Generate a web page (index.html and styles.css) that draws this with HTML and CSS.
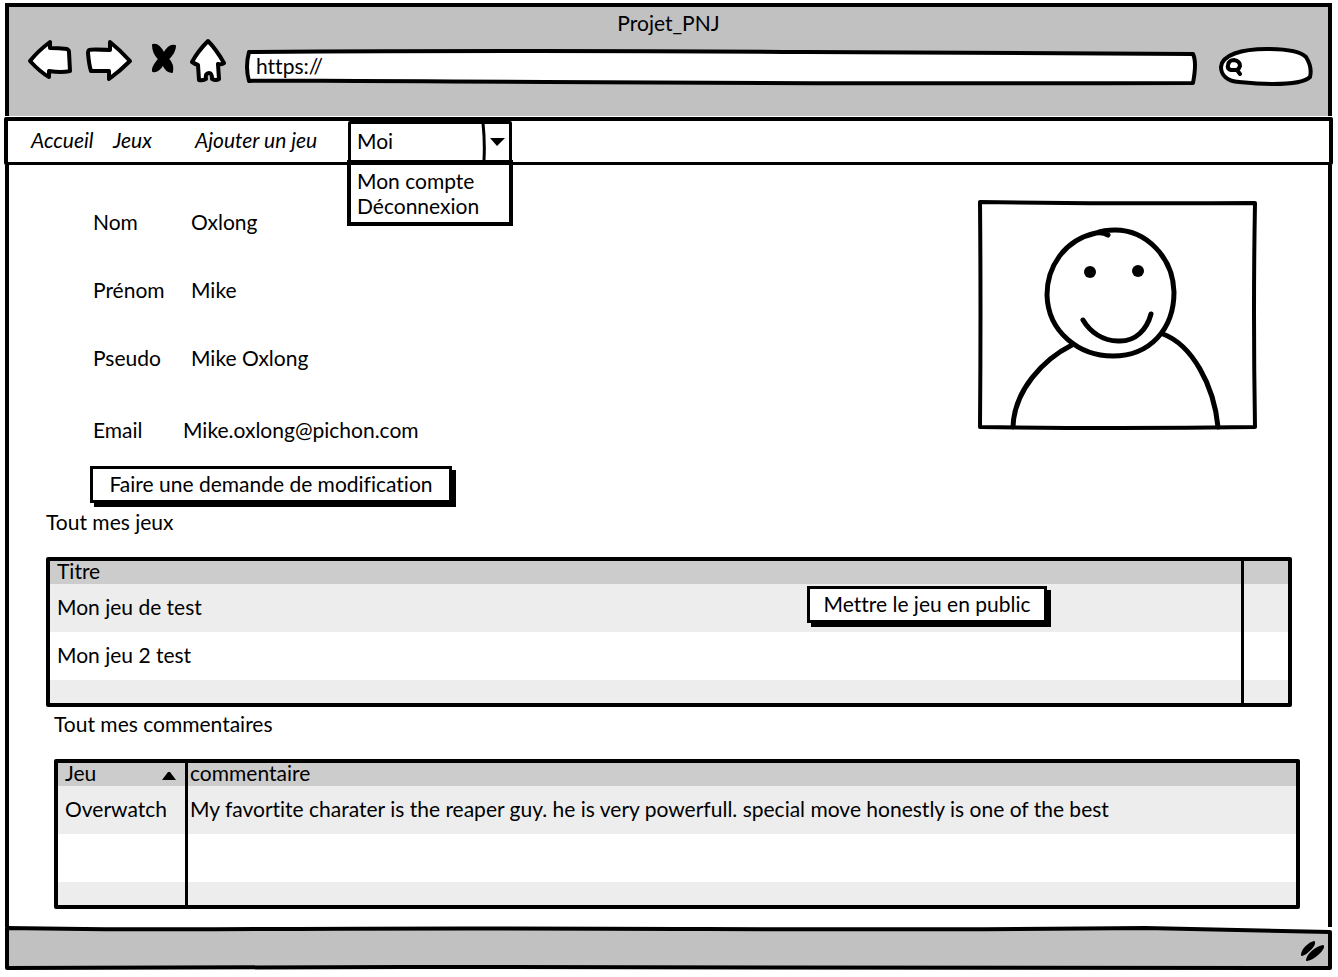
FILE: index.html
```
<!DOCTYPE html>
<html lang="fr">
<head>
<meta charset="utf-8">
<meta name="viewport" content="width=device-width, initial-scale=1">
<title>Projet_PNJ</title>
<link rel="stylesheet" href="styles.css">
</head>
<body>
<div class="window">
  <header class="chrome">
    <h1 class="chrome-title">Projet_PNJ</h1>
    <form class="toolbar">
      <button class="tool tool-back" type="button" aria-label="Précédent">
        <svg width="46" height="46" viewBox="27 38 46 46"><path d="M30 61Q38 51 50 42V48Q59 48 67 49Q69 50 69 52L70 71Q62 73 49 71V77Q40 72 30 61Z"/></svg>
      </button>
      <button class="tool tool-next" type="button" aria-label="Suivant">
        <svg width="48" height="46" viewBox="85 38 48 46"><path d="M89 50Q91 49 110 50V42Q120 50 130 61Q120 71 109 79V71Q98 71 91 71Q89 65 88 53Q88 51 89 50Z"/></svg>
      </button>
      <button class="tool tool-stop" type="button" aria-label="Arrêter">
        <svg width="28" height="46" viewBox="150 38 28 46"><path class="bold" d="M153 45C157 44 161 48 164 54C167 48 171 45 175 46C175 51 172 55 168 59C172 63 173 67 172 72C168 72 165 69 163 64C160 69 157 72 153 71C152 67 156 63 159 59C155 55 153 50 153 45Z"/></svg>
      </button>
      <button class="tool tool-home" type="button" aria-label="Accueil">
        <svg width="38" height="46" viewBox="190 38 38 46"><path d="M208 41Q216 49 224 63Q221 65 218 64L219 79Q216 81 212 79Q212 73 209 73Q205 73 206 79Q202 81 199 80L198 65Q195 64 192 62Q198 51 208 41Z"/></svg>
      </button>
      <div class="address">
        <svg class="frame" viewBox="0 0 950 36" preserveAspectRatio="none" aria-hidden="true"><path d="M4 3Q300 1 560 3T947 5Q951 13 947 34Q600 35 300 33T4 32Q0 18 4 3Z"/></svg>
        <input class="address-input" type="text" value="https://" aria-label="Adresse">
      </div>
      <div class="search">
        <svg class="frame" viewBox="0 0 94 38" preserveAspectRatio="none" aria-hidden="true"><path d="M20 34C8 33 2 27 2 19C3 7 22 1 48 1C68 1 81 3 87 9C92 17 92 25 91 29C85 35 67 36 54 36C40 36 30 35 20 34Z"/></svg>
        <svg class="search-icon" width="20" height="20" viewBox="0 0 20 20" aria-hidden="true"><path d="M12 13H6Q2 12 3 8Q4 3 9 3Q15 4 15 9Q14 12 12 13L15 17"/></svg>
        <input class="search-input" type="text" aria-label="Rechercher">
      </div>
    </form>
  </header>

  <nav class="menu">
    <a class="menu-link" href="#">Accueil</a>
    <a class="menu-link" href="#">Jeux</a>
    <a class="menu-link" href="#">Ajouter un jeu</a>
    <div class="account">
      <select class="account-select" aria-label="Compte"><option>Moi</option></select>
      <svg class="account-arrow" width="32" height="39" viewBox="0 0 32 39" aria-hidden="true"><path class="divider" d="M3 1Q5 20 4 38"/><path class="solid" d="M10 16H25L17 24Z"/></svg>
      <div class="account-list">
        <a class="account-item" href="#">Mon compte</a>
        <a class="account-item" href="#">Déconnexion</a>
      </div>
    </div>
  </nav>

  <main class="page">
    <section class="profile">
      <div class="profile-info">
        <dl class="fields">
          <div class="field"><dt>Nom</dt><dd>Oxlong</dd></div>
          <div class="field"><dt>Prénom</dt><dd>Mike</dd></div>
          <div class="field"><dt>Pseudo</dt><dd>Mike Oxlong</dd></div>
          <div class="field field-email"><dt>Email</dt><dd>Mike.oxlong@pichon.com</dd></div>
        </dl>
        <button class="button button-wide" type="button">Faire une demande de modification</button>
      </div>
      <svg class="avatar" width="280" height="230" viewBox="978 200 280 230" role="img" aria-label="Photo de profil">
        <path class="avatar-frame" d="M981 202Q1120 204 1256 203Q1254 310 1256 427Q1120 429 981 427Q982 310 981 202Z"/>
        <path d="M1109 235Q1104 232 1097 233C1065 240 1048 267 1048 295C1049 332 1080 356 1114 356C1151 356 1175 329 1175 292C1174 257 1147 230 1116 230Q1105 230 1097 233"/>
        <path d="M1084 320C1091 332 1104 341 1119 341C1137 342 1148 329 1152 314"/>
        <path d="M1073 345C1045 359 1015 390 1014 427M1164 334C1193 345 1215 385 1219 427"/>
        <circle class="solid" cx="1091" cy="272" r="6"/>
        <circle class="solid" cx="1139" cy="271" r="6"/>
      </svg>
    </section>

    <section class="games">
      <h2 class="heading">Tout mes jeux</h2>
      <div class="table-box">
        <table class="table">
          <colgroup><col><col class="col-end"></colgroup>
          <thead><tr><th scope="col">Titre</th><td></td></tr></thead>
          <tbody>
            <tr><td><div class="game"><span>Mon jeu de test</span><button class="button button-publish" type="button">Mettre le jeu en public</button></div></td><td></td></tr>
            <tr><td>Mon jeu 2 test</td><td></td></tr>
            <tr class="row-short"><td></td><td></td></tr>
          </tbody>
        </table>
      </div>
    </section>

    <section class="comments">
      <h2 class="heading">Tout mes commentaires</h2>
      <div class="table-box">
        <table class="table">
          <colgroup><col class="col-game"><col></colgroup>
          <thead><tr><th scope="col"><div class="sort"><span>Jeu</span><svg width="14" height="8" viewBox="0 0 14 8" aria-hidden="true"><path class="solid" d="M0 8L6 0H8L14 8Z"/></svg></div></th><th class="comment" scope="col">commentaire</th></tr></thead>
          <tbody>
            <tr><td>Overwatch</td><td class="comment">My favortite charater is the reaper guy. he is very powerfull. special move honestly is one of the best</td></tr>
            <tr><td></td><td></td></tr>
            <tr class="row-short"><td></td><td></td></tr>
          </tbody>
        </table>
      </div>
    </section>
  </main>

  <footer class="status">
    <svg class="frame" viewBox="0 0 1327 44" preserveAspectRatio="none" aria-hidden="true"><path class="status-shape" d="M2 1Q110 3 270 2T700 2T1140 1L1325 5V41Q800 41 400 40Q200 40 2 41Z"/></svg>
    <svg class="grip" width="26" height="22" viewBox="0 0 26 22" aria-hidden="true"><path class="bold" d="M2 15C2 10 9 3 14 2C15 5 8 13 2 15ZM7 20C8 14 17 7 23 6C24 9 14 19 7 20Z"/></svg>
  </footer>
</div>
</body>
</html>
```
FILE: styles.css
```
* {
  box-sizing: border-box;
}

body {
  margin: 0;
  background: #fff;
  color: #000;
  font-family: Lato, "Liberation Sans", sans-serif;
  font-size: 21px;
  font-variant-ligatures: none;
  line-height: 24px;
}

h1, h2, dl, dd {
  margin: 0;
  font: inherit;
  font-variant-ligatures: none;
}

button, input, select {
  color: inherit;
  font: inherit;
  font-variant-ligatures: none;
}

a {
  color: inherit;
  text-decoration: none;
}

svg {
  display: block;
  fill: none;
  stroke: #000;
  stroke-width: 4px;
  stroke-linecap: round;
  stroke-linejoin: round;
}

.solid {
  fill: #000;
  stroke: none;
}

.bold {
  fill: #000;
  stroke-width: 2px;
}

.window {
  padding: 3px 6px 6px 5px;
}

/* Browser chrome */
.chrome {
  height: 113px;
  padding-top: 4px;
  border: 4px solid #000;
  border-bottom: 0;
  background: #c1c1c1;
}

.chrome-title {
  text-align: center;
}

.toolbar {
  display: flex;
  align-items: center;
  padding: 1px 15px 0 18px;
}

.tool {
  flex: none;
  padding: 0;
  border: 0;
  background: none;
}

.tool svg {
  fill: #fff;
}

.tool-back { margin-right: 12px; }
.tool-next { margin-right: 17px; }
.tool-stop { margin-right: 12px; }
.tool-home { margin-right: 17px; }

.address,
.search {
  position: relative;
  display: flex;
  align-items: center;
}

.address {
  flex: 1;
  height: 36px;
  margin: 12px 23px 0 0;
}

.search {
  flex: none;
  width: 94px;
  height: 38px;
  margin-top: 12px;
}

.frame {
  position: absolute;
  inset: 0;
  width: 100%;
  height: 100%;
  overflow: visible;
  fill: #fff;
}

.frame path {
  vector-effect: non-scaling-stroke;
}

.address-input,
.search-input {
  position: relative;
  min-width: 0;
  flex: 1;
  padding: 0;
  border: 0;
  background: none;
  outline: none;
}

.address-input {
  margin: 0 12px 2px 11px;
}

.search-icon {
  position: relative;
  margin: 0 4px 0 6px;
}

.search-input {
  margin-right: 12px;
}

/* Navigation */
.menu {
  display: grid;
  grid-template-columns: 82px 82px 153px 164px;
  height: 48px;
  margin: 1px -1px 0;
  padding-left: 23px;
  border: 4px solid #000;
  border-bottom-width: 3px;
  border-radius: 2px;
}

.menu-link {
  padding-top: 7px;
  font-style: italic;
  white-space: nowrap;
}

.account {
  position: relative;
}

.account-select {
  width: 100%;
  height: 42px;
  padding: 0 6px 3px;
  border: 3px solid #000;
  border-radius: 2px;
  background: #fff;
  appearance: none;
}

.account-arrow {
  position: absolute;
  top: 1px;
  right: 0;
  pointer-events: none;
}

.divider {
  stroke-width: 3px;
}

.account-list {
  position: absolute;
  z-index: 1;
  top: 39px;
  right: -1px;
  left: -1px;
  padding: 3px 6px 4px;
  border: 4px solid #000;
  border-top-width: 5px;
  background: #fff;
}

.account-item {
  display: block;
  line-height: 25px;
}

/* Page */
.page {
  padding: 23px 36px 18px 37px;
  border: solid #000;
  border-width: 0 4px;
}

.profile {
  display: flex;
  justify-content: space-between;
  padding-left: 44px;
}

.field {
  display: flex;
  align-items: center;
  height: 68px;
  padding-left: 3px;
}

.field dt {
  width: 98px;
}

.field-email {
  margin: 4px 0 2px;
}

.field-email dt {
  width: 90px;
}

.button {
  height: 37px;
  padding: 0 12px 2px;
  border: 3px solid #000;
  background: #fff;
  box-shadow: 4px 4px #000;
  white-space: nowrap;
}

.button-wide {
  min-width: 362px;
}

.button-publish {
  min-width: 240px;
}

.avatar {
  margin: 12px 35px 0 0;
}

.avatar path {
  stroke-width: 5px;
}

.avatar .avatar-frame {
  stroke-width: 4px;
}

.games {
  margin-top: 7px;
}

.comments {
  margin: 5px -8px 0 8px;
}

.heading {
  margin-bottom: 23px;
}

.table-box {
  border: 4px solid #000;
  border-radius: 2px;
}

.table {
  width: 100%;
  table-layout: fixed;
  border-collapse: separate;
  border-spacing: 0;
}

.col-end { width: 44px; }
.col-game { width: 130px; }

.table th,
.table td {
  height: 48px;
  padding: 0 7px 3px;
  font-weight: 400;
  text-align: left;
}

.table thead th,
.table thead td,
.table .row-short td {
  height: 23px;
  padding-top: 0;
  padding-bottom: 3px;
  line-height: 20px;
}

.table thead {
  background: #ccc;
}

.table tbody tr:nth-child(odd) {
  background: #ededed;
}

.table tr > :first-child {
  border-right: 3px solid #000;
}

.table tr > .comment {
  padding-left: 2px;
}

.game,
.sort {
  display: flex;
  align-items: center;
  justify-content: space-between;
}

.sort svg {
  margin: 5px 2px 0 0;
}

.button-publish {
  margin: 0 187px 4px 0;
}

/* Status bar */
.status {
  position: relative;
  display: flex;
  align-items: center;
  justify-content: flex-end;
  height: 44px;
  padding: 3px 6px 0 0;
}

.status-shape {
  fill: #c1c1c1;
}

.grip {
  position: relative;
}
```
